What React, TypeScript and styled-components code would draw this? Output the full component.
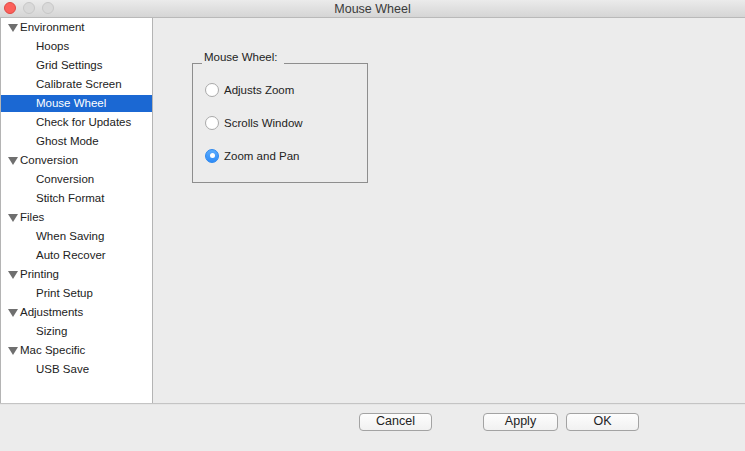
import React from "react";
import styled, { createGlobalStyle } from "styled-components";

const Global = createGlobalStyle`
  html, body { margin: 0; padding: 0; background: #ececec; }
  body { font-family: "Helvetica Neue", "Liberation Sans", Arial, sans-serif; color: #232323; }
  * { box-sizing: border-box; }
`;

const Window = styled.div`
  width: 745px;
  height: 451px;
  display: flex;
  flex-direction: column;
  background: #ececec;
  overflow: hidden;
`;

const TitleBar = styled.div`
  position: relative;
  height: 18px;
  flex: none;
  display: flex;
  align-items: center;
  justify-content: center;
  background: linear-gradient(#ebebeb, #d5d5d5);
  border-bottom: 1px solid #b9b9b9;
  font-size: 12.5px;
  color: #3a3a3a;
`;

const Lights = styled.div`
  position: absolute;
  left: 4px;
  top: 2px;
  display: flex;
  gap: 7px;
`;

const Light = styled.span<{ $c: string; $b: string }>`
  width: 12px;
  height: 12px;
  border-radius: 50%;
  background: ${(p) => p.$c};
  border: 1px solid ${(p) => p.$b};
`;

const Body = styled.div`
  flex: none;
  height: 386px;
  display: flex;
  border-bottom: 1px solid #c4c4c4;
`;

const Sidebar = styled.div`
  width: 153px;
  flex: none;
  background: #fff;
  border: 1px solid #b4b4b4;
  border-top: none;
  border-bottom: none;
  display: flex;
  flex-direction: column;
`;

const Row = styled.div<{ $child?: boolean; $sel?: boolean }>`
  height: 19px;
  display: flex;
  align-items: center;
  padding-left: ${(p) => (p.$child ? "35px" : "7px")};
  padding-bottom: 2px;
  font-size: 11.5px;
  color: ${(p) => (p.$sel ? "#fff" : "#222")};
  background: ${(p) =>
    p.$sel ? "linear-gradient(transparent 0 1px, #1b68d3 1px 18px, transparent 18px)" : "transparent"};
  white-space: nowrap;
`;

const Tri = styled.span`
  width: 0;
  height: 0;
  border-left: 5px solid transparent;
  border-right: 5px solid transparent;
  border-top: 8px solid #6f6f6f;
  margin-right: 2px;
  margin-top: 2px;
`;

const Main = styled.div`
  flex: 1;
  padding: 39px 0 0 39px;
`;

const Group = styled.fieldset`
  width: 176px;
  height: 126px;
  margin: 0;
  padding: 4px 0 0 12px;
  border: 1px solid #8e8e8e;
  display: flex;
  flex-direction: column;
`;

const Legend = styled.legend`
  position: relative;
  top: -6px;
  font-size: 11.5px;
  padding: 0 6px 0 2px;
  margin-left: -3px;
  color: #232323;
`;

const Option = styled.label`
  height: 33px;
  display: flex;
  align-items: center;
  gap: 5px;
  font-size: 11.5px;
  color: #232323;
`;

const Radio = styled.span<{ $on?: boolean }>`
  width: 14px;
  height: 14px;
  border-radius: 50%;
  display: flex;
  align-items: center;
  justify-content: center;
  background: ${(p) => (p.$on ? "linear-gradient(#5aacfd, #2f8cf8)" : "#fff")};
  border: 1px solid ${(p) => (p.$on ? "#2b87ee" : "#a9a9a9")};
  &::after {
    content: "";
    width: 5px;
    height: 5px;
    border-radius: 50%;
    background: #fff;
    display: ${(p) => (p.$on ? "block" : "none")};
  }
`;

const Footer = styled.div`
  flex: 1;
  padding: 8px 0 0 359px;
  display: flex;
  align-items: flex-start;
  border-top: 1px solid #e6e6e6;
`;

const Button = styled.button<{ $gap?: number; $w: number }>`
  width: ${(p) => p.$w}px;
  height: 18px;
  margin-left: ${(p) => p.$gap ?? 0}px;
  padding: 0 0 1px;
  border: 1px solid #a3a3a3;
  border-radius: 4px;
  background: linear-gradient(#fdfdfd, #f1f1f1);
  font-family: inherit;
  font-size: 12.5px;
  color: #232323;
  line-height: 15px;
`;

const tree: { label: string; children: string[] }[] = [
  { label: "Environment", children: ["Hoops", "Grid Settings", "Calibrate Screen", "Mouse Wheel", "Check for Updates", "Ghost Mode"] },
  { label: "Conversion", children: ["Conversion", "Stitch Format"] },
  { label: "Files", children: ["When Saving", "Auto Recover"] },
  { label: "Printing", children: ["Print Setup"] },
  { label: "Adjustments", children: ["Sizing"] },
  { label: "Mac Specific", children: ["USB Save"] },
];

export default function App() {
  return (
    <Window>
      <Global />
      <TitleBar>
        <Lights>
          <Light $c="#fc605b" $b="#de4a44" />
          <Light $c="#d9d9d9" $b="#c7c7c7" />
          <Light $c="#d9d9d9" $b="#c7c7c7" />
        </Lights>
        Mouse Wheel
      </TitleBar>
      <Body>
        <Sidebar>
          {tree.map((g) => (
            <React.Fragment key={g.label}>
              <Row>
                <Tri />
                {g.label}
              </Row>
              {g.children.map((c) => (
                <Row key={c} $child $sel={c === "Mouse Wheel"}>
                  {c}
                </Row>
              ))}
            </React.Fragment>
          ))}
        </Sidebar>
        <Main>
          <Group>
            <Legend>Mouse Wheel:</Legend>
            <Option>
              <Radio />
              Adjusts Zoom
            </Option>
            <Option>
              <Radio />
              Scrolls Window
            </Option>
            <Option>
              <Radio $on />
              Zoom and Pan
            </Option>
          </Group>
        </Main>
      </Body>
      <Footer>
        <Button $w={73}>Cancel</Button>
        <Button $w={75} $gap={51}>Apply</Button>
        <Button $w={73} $gap={8}>OK</Button>
      </Footer>
    </Window>
  );
}
